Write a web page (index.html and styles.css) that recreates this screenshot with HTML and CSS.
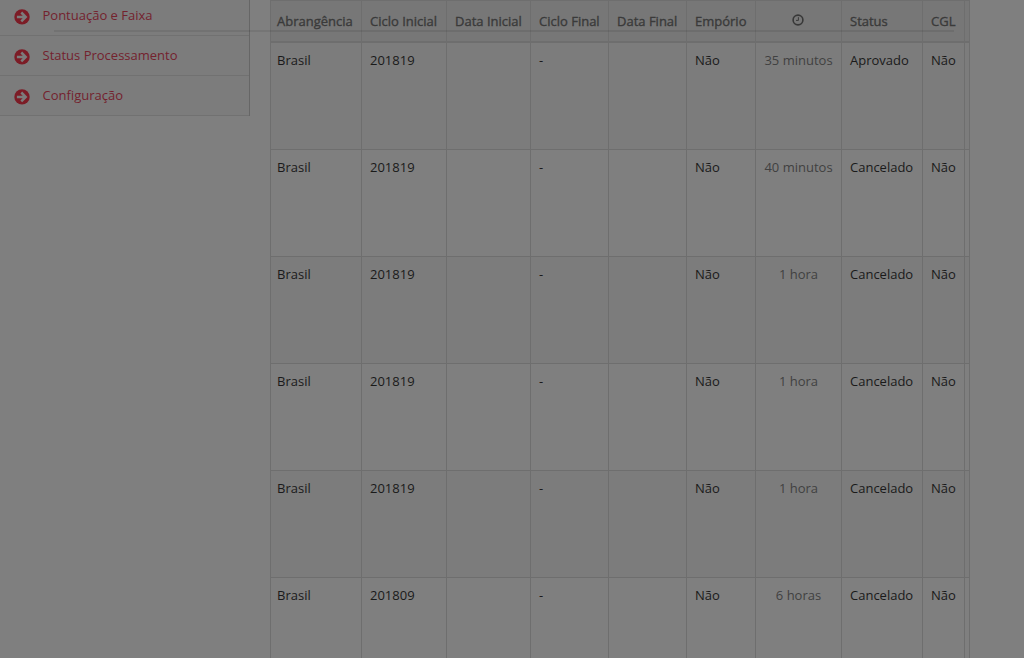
FILE: index.html
```
<!DOCTYPE html>
<html lang="pt-BR">
<head>
<meta charset="utf-8">
<title>Status Processamento</title>
<link rel="stylesheet" href="styles.css">
</head>
<body>
<svg class="symbols"><defs><symbol id="arrow" viewBox="0 0 16 16"><circle cx="8" cy="8.4" r="7.7" fill="#7c1c26"/><path d="M2.9 8.4H11.5M7.3 4L11.7 8.4L7.3 12.8" fill="none" stroke="#7c7c7c" stroke-width="2.5"/></symbol></defs></svg>
<div class="page">
<nav class="menu">
<a class="item"><svg class="arrow"><use href="#arrow"/></svg><span>Pontuação e Faixa</span></a>
<a class="item"><svg class="arrow"><use href="#arrow"/></svg><span>Status Processamento</span></a>
<a class="item"><svg class="arrow"><use href="#arrow"/></svg><span>Configuração</span></a>
</nav>
<table class="grid">
<colgroup><col class="c1"><col class="c2"><col class="c3"><col class="c4"><col class="c5"><col class="c6"><col class="c7"><col class="c8"><col class="c9"><col class="c10"></colgroup>
<thead><tr><th>Abrangência</th><th>Ciclo Inicial</th><th>Data Inicial</th><th>Ciclo Final</th><th>Data Final</th><th>Empório</th><th class="time"><svg class="clock" viewBox="0 0 12 12"><circle cx="6" cy="6" r="4.9"/><path d="M6.4 3.2V6.4H4"/></svg></th><th>Status</th><th>CGL</th><th></th></tr></thead>
<tbody>
<tr><td>Brasil</td><td>201819</td><td></td><td>-</td><td></td><td>Não</td><td class="time">35 minutos</td><td>Aprovado</td><td>Não</td><td></td></tr>
<tr><td>Brasil</td><td>201819</td><td></td><td>-</td><td></td><td>Não</td><td class="time">40 minutos</td><td>Cancelado</td><td>Não</td><td></td></tr>
<tr><td>Brasil</td><td>201819</td><td></td><td>-</td><td></td><td>Não</td><td class="time">1 hora</td><td>Cancelado</td><td>Não</td><td></td></tr>
<tr><td>Brasil</td><td>201819</td><td></td><td>-</td><td></td><td>Não</td><td class="time">1 hora</td><td>Cancelado</td><td>Não</td><td></td></tr>
<tr><td>Brasil</td><td>201819</td><td></td><td>-</td><td></td><td>Não</td><td class="time">1 hora</td><td>Cancelado</td><td>Não</td><td></td></tr>
<tr><td>Brasil</td><td>201809</td><td></td><td>-</td><td></td><td>Não</td><td class="time">6 horas</td><td>Cancelado</td><td>Não</td><td></td></tr>
</tbody>
</table>
<div class="rule"></div>
</div>
</body>
</html>
```
FILE: styles.css
```
body { margin: 0; background: #7f7f7f; font: 13px/20px "Open Sans", sans-serif; color: #1a1a1a; }
.symbols { position: absolute; width: 0; height: 0; }
.page { position: relative; display: flex; align-items: flex-start; gap: 20px; width: 1024px; height: 658px; overflow: hidden; }
.menu { width: 249px; flex: none; border-right: 1px solid #666; background: #7c7c7c; }
.item { display: flex; align-items: center; gap: 12.5px; height: 39px; padding-left: 14px; border-bottom: 1px solid #717171; color: #74222e; font-weight: 400; }
.item span { margin-top: -2px; }
.item:first-child { height: 35px; }
.item:first-child span { margin-top: -6px; }
.item:first-child .arrow { margin-top: -3px; }
.arrow { width: 16px; height: 17px; margin-top: 1px; flex: none; }
.grid { width: 700px; flex: none; table-layout: fixed; border-collapse: separate; border-spacing: 0; border-left: 1px solid #6e6e6e; }
.c1 { width: 91px; } .c2 { width: 85px; } .c3 { width: 84px; } .c4 { width: 78px; } .c5 { width: 78px; }
.c6 { width: 69px; } .c7 { width: 86px; } .c8 { width: 81px; } .c9 { width: 42px; } .c10 { width: 5px; }
.grid th, .grid td { box-sizing: border-box; padding: 7px 0 0 8px; text-align: left; vertical-align: top; white-space: nowrap; border-right: 1px solid #6e6e6e; }
.grid th:first-child, .grid td:first-child { padding-left: 6px; }
.grid th:last-child, .grid td:last-child { padding-left: 0; }
.grid th { height: 43px; padding-top: 10px; border-top: 1px solid #6e6e6e; border-bottom: 2px solid #6e6e6e; background: #777; color: #3a3a3a; font-weight: 400; -webkit-text-stroke: .35px #3a3a3a; }
.grid td { height: 107px; border-bottom: 1px solid #6e6e6e; }
.grid tbody tr:nth-child(odd) { background: #7c7c7c; }
.grid .time { padding-left: 0; text-align: center; }
.grid td.time { color: #414141; }
.grid th.time { padding-right: 2px; }
.clock { display: block; width: 12px; height: 12px; margin: 3px auto 0; fill: none; stroke: #383838; stroke-width: 1.6; }
.clock path { stroke-width: 1; }
.rule { position: absolute; left: 54px; top: 30px; width: 900px; height: 2px; background: rgba(0, 0, 0, .08); }
```
